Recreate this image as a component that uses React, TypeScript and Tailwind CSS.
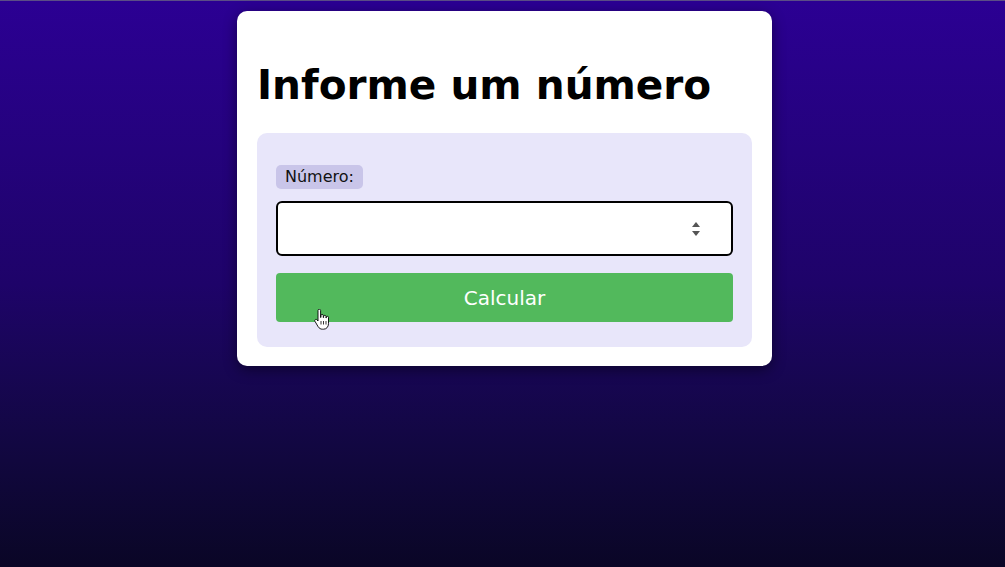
const HandCursor = () => (
  <svg
    className="pointer-events-none absolute left-[38px] top-[36px]"
    width="16"
    height="22"
    viewBox="0 0 16 22"
  >
    <path
      d="M4 1.5c0-.8.6-1.3 1.3-1.3s1.3.5 1.3 1.3v7l.3-.1V6.6c0-.8.6-1.2 1.2-1.2s1.2.4 1.2 1.2v2l.3-.1V7.4c0-.7.6-1.1 1.2-1.1s1.2.4 1.2 1.1v1.6l.3-.1v-.6c0-.7.5-1 1.1-1s1.1.3 1.1 1v6.3c0 3.2-2 5.6-5 5.6H8.5c-2 0-3.1-.8-4.3-2.4L1 12.4c-.5-.7-.3-1.4.3-1.8.6-.4 1.4-.2 1.9.4L4 12V1.5z"
      fill="#fff"
      stroke="#000"
      strokeWidth="0.9"
    />
    <path d="M7 12v3.5M9.5 12v3.5M12 12v3.5" stroke="#000" strokeWidth="0.8" />
  </svg>
);

const SpinArrows = () => (
  <svg width="10" height="20" viewBox="0 0 10 20" className="shrink-0">
    <path d="M5 3 L9 8 L1 8 Z" fill="#555" />
    <path d="M5 17 L9 12 L1 12 Z" fill="#555" />
  </svg>
);

export default function App() {
  return (
    <div className="min-h-[567px] w-full border-t border-[#5b4e86] bg-gradient-to-b from-[#2b0093] via-[#1e0369] to-[#0a0626] pl-[4px] font-['DejaVu_Sans',sans-serif]">
      <div className="flex justify-center pt-[10px]">
        <div className="w-[535px] rounded-[10px] bg-white px-[20px] pb-[19px] pt-[20px] shadow-[0_4px_14px_rgba(0,0,0,0.45)]">
          <h1 className="mb-[24px] mt-[30px] text-[40.6px] font-bold leading-[normal] text-black">
            Informe um número
          </h1>
          <div className="relative rounded-[10px] bg-[#e8e6fa] px-[19px] pb-[25px] pt-[32px]">
            <span className="inline-block rounded-[5px] bg-[#c9c5e9] px-[9px] py-[2px] text-[16px] leading-[20px] text-[#111]">
              Número:
            </span>
            <div className="mt-[12px] flex h-[55px] items-center justify-end rounded-[6px] border-2 border-black bg-white pr-[30px]">
              <SpinArrows />
            </div>
            <div className="relative mt-[17px]">
              <button className="h-[49px] w-full rounded-[4px] bg-[#52b95c] text-[20px] text-white">
                Calcular
              </button>
              <HandCursor />
            </div>
          </div>
        </div>
      </div>
    </div>
  );
}
